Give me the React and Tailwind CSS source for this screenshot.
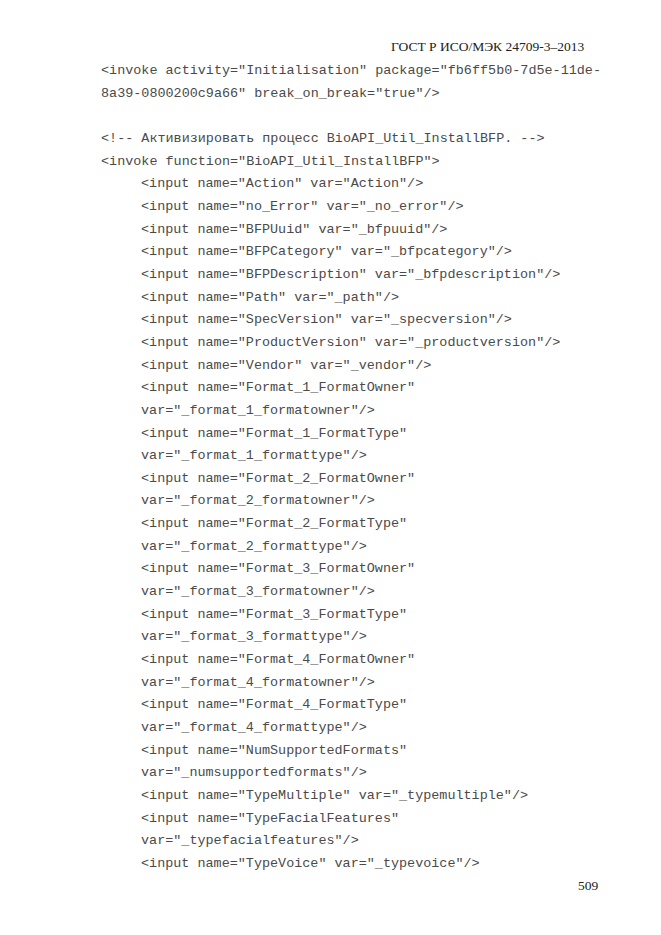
import React from 'react';

const lines = [
  { t: '<invoke activity="Initialisation" package="fb6ff5b0-7d5e-11de-' },
  { t: '8a39-0800200c9a66" break_on_break="true"/>' },
  { t: '' },
  { t: '<!-- Активизировать процесс BioAPI_Util_InstallBFP. -->' },
  { t: '<invoke function="BioAPI_Util_InstallBFP">' },
  { t: '<input name="Action" var="Action"/>', i: true },
  { t: '<input name="no_Error" var="_no_error"/>', i: true },
  { t: '<input name="BFPUuid" var="_bfpuuid"/>', i: true },
  { t: '<input name="BFPCategory" var="_bfpcategory"/>', i: true },
  { t: '<input name="BFPDescription" var="_bfpdescription"/>', i: true },
  { t: '<input name="Path" var="_path"/>', i: true },
  { t: '<input name="SpecVersion" var="_specversion"/>', i: true },
  { t: '<input name="ProductVersion" var="_productversion"/>', i: true },
  { t: '<input name="Vendor" var="_vendor"/>', i: true },
  { t: '<input name="Format_1_FormatOwner"', i: true },
  { t: 'var="_format_1_formatowner"/>', i: true },
  { t: '<input name="Format_1_FormatType"', i: true },
  { t: 'var="_format_1_formattype"/>', i: true },
  { t: '<input name="Format_2_FormatOwner"', i: true },
  { t: 'var="_format_2_formatowner"/>', i: true },
  { t: '<input name="Format_2_FormatType"', i: true },
  { t: 'var="_format_2_formattype"/>', i: true },
  { t: '<input name="Format_3_FormatOwner"', i: true },
  { t: 'var="_format_3_formatowner"/>', i: true },
  { t: '<input name="Format_3_FormatType"', i: true },
  { t: 'var="_format_3_formattype"/>', i: true },
  { t: '<input name="Format_4_FormatOwner"', i: true },
  { t: 'var="_format_4_formatowner"/>', i: true },
  { t: '<input name="Format_4_FormatType"', i: true },
  { t: 'var="_format_4_formattype"/>', i: true },
  { t: '<input name="NumSupportedFormats"', i: true },
  { t: 'var="_numsupportedformats"/>', i: true },
  { t: '<input name="TypeMultiple" var="_typemultiple"/>', i: true },
  { t: '<input name="TypeFacialFeatures"', i: true },
  { t: 'var="_typefacialfeatures"/>', i: true },
  { t: '<input name="TypeVoice" var="_typevoice"/>', i: true },
];

export default function App() {
  return (
    <div className="w-[661px] h-[935px] bg-white overflow-hidden relative">
      {/* Running header */}
      <div className="pt-[38px] pl-[391px] h-[60px] font-['Liberation_Serif',serif] text-[13.5px] leading-[18px] text-[#222]">
        ГОСТ Р ИСО/МЭК 24709-3–2013
      </div>

      {/* Code listing */}
      <div className="pl-[101px] font-['Liberation_Mono',monospace] text-[13.45px] leading-[22.67px] text-[#4a4a4a] whitespace-pre">
        {lines.map((l, idx) => (
          <div key={idx} className={l.i ? 'pl-[40px] h-[22.67px]' : 'h-[22.67px]'}>
            {l.t}
          </div>
        ))}
      </div>

      {/* Page number */}
      <div className="pl-[578px] pt-[1px] font-['Liberation_Serif',serif] text-[13.5px] leading-[18px] text-[#222]">
        509
      </div>
    </div>
  );
}
